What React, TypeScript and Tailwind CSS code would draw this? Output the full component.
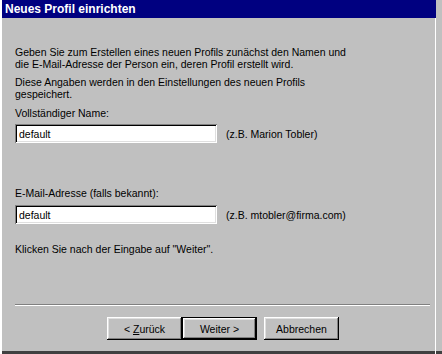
import { FC } from "react"

const raised =
  "shadow-[inset_-1px_-1px_0_#000,inset_1px_1px_0_#fff,inset_-2px_-2px_0_#808080,inset_2px_2px_0_#dfdfdf]"
const sunken =
  "shadow-[inset_1px_1px_0_#808080,inset_-1px_-1px_0_#fff,inset_2px_2px_0_#000,inset_-2px_-2px_0_#dfdfdf]"

const Field: FC<{ value: string; hint: string }> = ({ value, hint }) => (
  <div className="flex items-center">
    <div className={`w-[202px] h-[19px] bg-white pl-[4px] flex items-center ${sunken}`}>{value}</div>
    <span className="ml-[9px]">{hint}</span>
  </div>
)

const App: FC = () => {
  return (
    <div
      className="w-[442px] h-[354px] bg-[#c0c0c0] flex flex-col text-[10.5px] leading-[12px] text-black shadow-[inset_2px_0_0_#fff,inset_0_-3px_0_#404040]"
      style={{ fontFamily: '"Liberation Sans", Arial, sans-serif' }}
    >
      <div className="ml-[2px] mr-[6px] h-[18px] bg-[#000080] text-white font-bold text-[12px] leading-[18px] pl-[3px]">
        Neues Profil einrichten
      </div>
      <div className="flex-1 flex flex-col ml-[2px] mr-[6px] pl-[13px] pt-[28px] shadow-[inset_-1px_0_0_#fff]">
        <p>
          Geben Sie zum Erstellen eines neuen Profils zunächst den Namen und
          <br />
          die E-Mail-Adresse der Person ein, deren Profil erstellt wird.
        </p>
        <p className="mt-[6px]">
          Diese Angaben werden in den Einstellungen des neuen Profils
          <br />
          gespeichert.
        </p>
        <p className="mt-[7px]">Vollständiger Name:</p>
        <div className="mt-[5px]">
          <Field value="default" hint="(z.B. Marion Tobler)" />
        </div>
        <p className="mt-[44px]">E-Mail-Adresse (falls bekannt):</p>
        <div className="mt-[6px]">
          <Field value="default" hint="(z.B. mtobler@firma.com)" />
        </div>
        <p className="mt-[19px]">Klicken Sie nach der Eingabe auf "Weiter".</p>
        <div className="mt-[49px] mr-[6px] h-[2px] border-t border-t-[#808080] border-b border-b-white" />
        <div className="mt-[11px] flex pl-[92px]">
          <button className={`w-[75px] h-[23px] bg-[#c0c0c0] ${raised}`}>
            &lt; <span className="underline">Z</span>urück
          </button>
          <div className="w-[75px] h-[23px] border border-black">
            <button className={`w-full h-full bg-[#c0c0c0] ${raised}`}>Weiter &gt;</button>
          </div>
          <button className={`ml-[7px] w-[75px] h-[23px] bg-[#c0c0c0] ${raised}`}>Abbrechen</button>
        </div>
      </div>
    </div>
  )
}

export default App
